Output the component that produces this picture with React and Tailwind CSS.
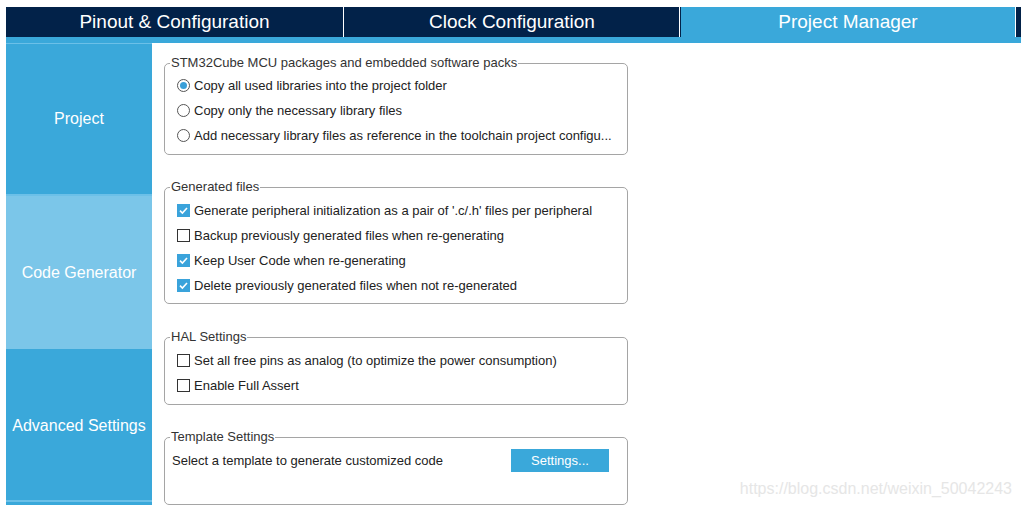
import React from "react";

const font = { fontFamily: '"Liberation Sans", Arial, sans-serif' };

const tabs = [
  { label: "Pinout & Configuration", active: false, w: "w-[338px]" },
  { label: "Clock Configuration", active: false, w: "w-[335px]" },
  { label: "Project Manager", active: true, w: "w-[335px]" },
];

const Radio = ({ checked }) => (
  <span className="w-[13px] h-[13px] rounded-full border border-[#555] bg-white flex items-center justify-center shrink-0">
    {checked && <span className="w-[7px] h-[7px] rounded-full bg-[#3a9fd8]" />}
  </span>
);

const Check = ({ checked }) =>
  checked ? (
    <span className="w-[13px] h-[13px] bg-[#3aa3db] flex items-center justify-center shrink-0">
      <svg width="11" height="11" viewBox="0 0 11 11">
        <path d="M2 5.6 L4.4 8 L9 3" fill="none" stroke="#fff" strokeWidth="1.6" />
      </svg>
    </span>
  ) : (
    <span className="w-[13px] h-[13px] border border-[#333] bg-white shrink-0" />
  );

const Row = ({ children, label }) => (
  <div className="h-[25px] flex items-center gap-[4px] pl-[12px] text-[13px] text-[#222]">
    {children}
    <span className="whitespace-nowrap">{label}</span>
  </div>
);

const Group = ({ title, children, className = "" }) => (
  <fieldset className={`border border-[#a5a5a5] rounded-[5px] w-[464px] ${className}`}>
    <legend className="ml-[5px] px-[1px] text-[13px] leading-[16px] text-[#333]">{title}</legend>
    {children}
  </fieldset>
);

export default function App() {
  return (
    <div className="w-[1021px] h-[506px] bg-white overflow-hidden relative" style={font}>
      <div className="pt-[7px] pl-[6px]">
        <div className="h-[30px] bg-[#022249] flex gap-[1px]">
          {tabs.map((t) => (
            <div
              key={t.label}
              className={`${t.w} h-full flex items-center justify-center text-white text-[19px] ${
                t.active ? "bg-[#3aa8da]" : "bg-[#022249]"
              } border-r border-white`}
            >
              {t.label}
            </div>
          ))}
        </div>
        <div className="h-[6px] bg-[#3aa8da]" />
        <div className="flex">
          <div className="w-[146px] flex flex-col text-white text-[16px] bg-[#3aa8da]">
            <div className="h-[153px] border-t border-[#6bc0e8] border-b-2 flex items-center justify-center">
              Project
            </div>
            <div className="h-[153px] bg-[#7bc6e9] flex items-center justify-center">Code Generator</div>
            <div className="h-[153px] pt-[3px] border-b-2 border-[#6bc0e8] flex items-center justify-center">
              Advanced Settings
            </div>
          </div>
          <div className="pl-[12px] pt-[12px] flex flex-col">
            <Group title="STM32Cube MCU packages and embedded software packs" className="pt-[2px] pb-[6px]">
              <Row label="Copy all used libraries into the project folder">
                <Radio checked />
              </Row>
              <Row label="Copy only the necessary library files">
                <Radio />
              </Row>
              <Row label="Add necessary library files as reference in the toolchain project configu...">
                <Radio />
              </Row>
            </Group>
            <Group title="Generated files" className="mt-[24px] pt-[3px] pb-[5px]">
              <Row label="Generate peripheral initialization as a pair of '.c/.h' files per peripheral">
                <Check checked />
              </Row>
              <Row label="Backup previously generated files when re-generating">
                <Check />
              </Row>
              <Row label="Keep User Code when re-generating">
                <Check checked />
              </Row>
              <Row label="Delete previously generated files when not re-generated">
                <Check checked />
              </Row>
            </Group>
            <Group title="HAL Settings" className="mt-[25px] pt-[3px] pb-[6px]">
              <Row label="Set all free pins as analog (to optimize the power consumption)">
                <Check />
              </Row>
              <Row label="Enable Full Assert">
                <Check />
              </Row>
            </Group>
            <Group title="Template Settings" className="mt-[24px] h-[76px]">
              <div className="flex items-center pl-[7px] pt-[4px] text-[13px] text-[#222]">
                <span className="w-[339px]">Select a template to generate customized code</span>
                <button className="w-[98px] h-[23px] bg-[#3aa8da] text-white text-[13px]">Settings...</button>
              </div>
            </Group>
          </div>
        </div>
      </div>
      <div className="absolute right-[9px] top-[477px] text-[16px] text-[#e6e6e6]">
        https://blog.csdn.net/weixin_50042243
      </div>
    </div>
  );
}
